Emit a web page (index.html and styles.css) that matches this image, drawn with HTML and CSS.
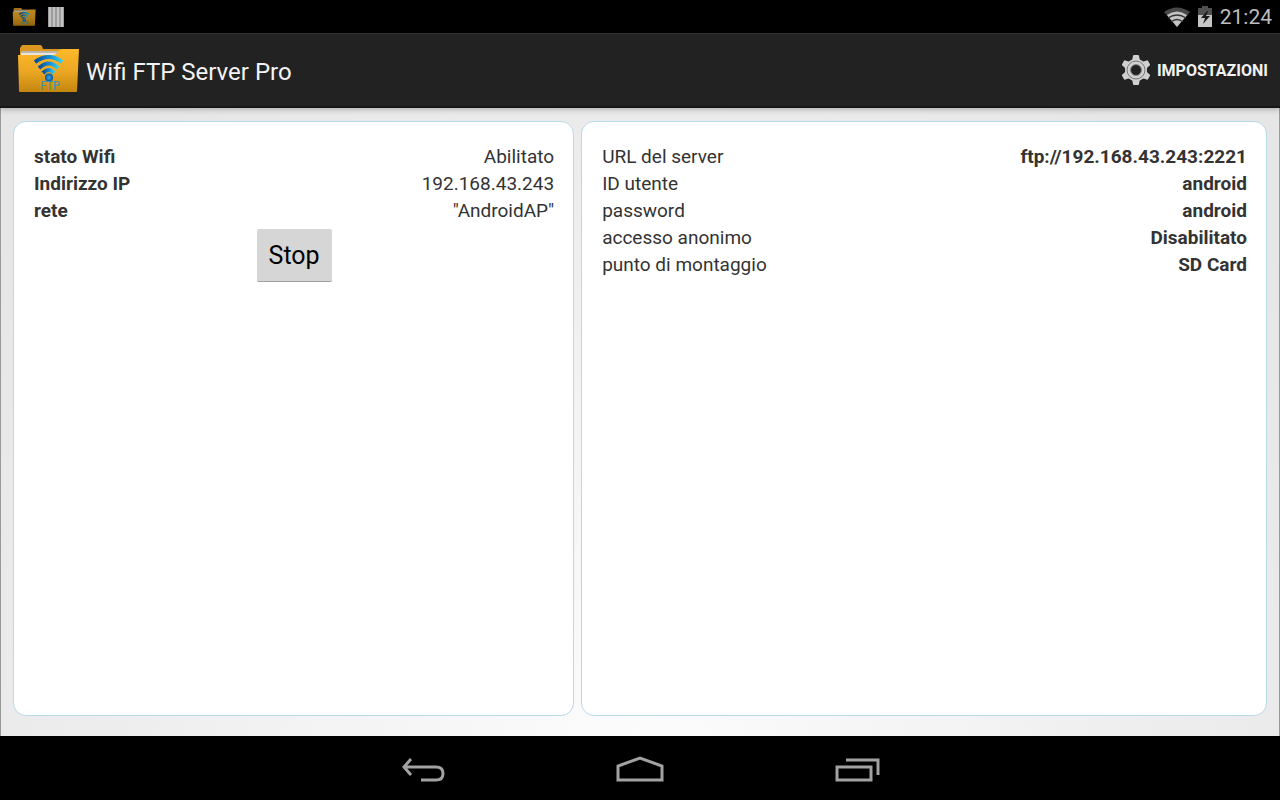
FILE: index.html
```html
<!DOCTYPE html>
<html lang="it">
  <head>
    <meta charset="UTF-8" />
    <meta name="viewport" content="width=device-width, initial-scale=1.0" />
    <title>Wifi FTP Server Pro</title>
    <link rel="stylesheet" href="styles.css">
  </head>
  <body>
    <div class="status-bar">
      <div class="notifications">
        <svg class="small-folder" width="24" height="20" viewBox="0 0 64 50">
          <use href="#folder" />
        </svg>
        <svg width="16" height="20" viewBox="0 0 16 20">
          <rect width="16" height="20" fill="#777" />
          <path d="M2 0V20M6 0V20M10 0V20M14 0V20" stroke="#c4c4c4" stroke-width="3" />
        </svg>
      </div>
      <div class="system">
        <svg width="26" height="20" viewBox="0 0 26 20">
          <path d="M0 5Q13 -4 26 5L13 20Z" fill="#484848" />
          <path d="M3 8Q13 1 23 8L13 20Z" fill="#c4c4c4" />
          <path d="M4 11Q13 5 22 11M7 15Q13 10 19 15" fill="none" stroke="#333" stroke-width="1.300" />
        </svg>
        <svg width="14" height="21" viewBox="0 0 14 21">
          <path d="M4 0H10V2H14V9H0V2H4Z" fill="#505050" />
          <path d="M0 9H14V21H0Z" fill="#c4c4c4" />
          <path d="M9 5L3 12H7L5 18L12 10H8L10 5Z" fill="#1a1a1a" />
        </svg>
        <span class="clock">21:24</span>
      </div>
    </div>

    <header class="action-bar">
      <svg class="logo" width="64" height="50" viewBox="0 1 64 50">
        <defs>
          <linearGradient id="gold" x1="0" y1="0" x2="0" y2="1">
            <stop offset="0" stop-color="#fdb82a" />
            <stop offset="0.5" stop-color="#eda824" />
            <stop offset="1" stop-color="#c4860f" />
          </linearGradient>
          <linearGradient id="wave" x1="0" y1="0" x2="1" y2="0">
            <stop offset="0" stop-color="#084d96" />
            <stop offset="0.5" stop-color="#1687cf" />
            <stop offset="1" stop-color="#2bd0f4" />
          </linearGradient>
          <radialGradient id="ball">
            <stop offset="0" stop-color="#35a7ee" />
            <stop offset="1" stop-color="#07539b" />
          </radialGradient>
        </defs>
        <g id="folder">
          <path d="M4 12V4L6 1H24Q26 1 27 5H44V14H4Z" fill="#dc9720" />
          <path d="M5 7H42V13H5Z" fill="#bcb5ab" />
          <path d="M5 9H42V13H5Z" fill="#e9e5df" />
          <path d="M2 11H38Q41 10 43 6Q44 5 46 5H63L61 47Q61 48 60 48H4Q3 48 3 47Z" fill="url(#gold)" />
          <g fill="none" stroke="url(#wave)" stroke-width="4">
            <path d="M19 18Q33 8 46 18" />
            <path d="M23 24Q33 15 42 24" />
            <path d="M27 29Q33 23 38 29" />
          </g>
          <circle cx="33" cy="33.500" r="4" fill="url(#ball)" />
          <text class="logo-text" x="34" y="46" text-anchor="middle">FTP</text>
        </g>
      </svg>
      <h1 class="title">Wifi FTP Server Pro</h1>
      <button class="settings" type="button">
        <svg width="28" height="30" viewBox="0 0 28 30">
          <g fill="#d0d0d0">
            <circle cx="14" cy="15" r="11" />
            <path id="teeth" d="M10 6L11 1Q11 0 12 0H16Q17 0 17 1L18 6V24L17 29Q17 30 16 30H12Q11 30 11 29L10 24Z" />
            <use href="#teeth" transform="rotate(60 14 15)" />
            <use href="#teeth" transform="rotate(120 14 15)" />
          </g>
          <circle cx="14" cy="15" r="9" fill="none" stroke="#777" stroke-width="1" />
          <circle cx="14" cy="15" r="5.500" fill="#222" stroke="#8a8a8a" stroke-width="1" />
        </svg>
        Impostazioni
      </button>
    </header>

    <main class="content">
      <section class="panel">
        <dl class="info">
          <div class="row"><dt class="strong">stato Wifi</dt><dd>Abilitato</dd></div>
          <div class="row"><dt class="strong">Indirizzo IP</dt><dd>192.168.43.243</dd></div>
          <div class="row"><dt class="strong">rete</dt><dd>"AndroidAP"</dd></div>
        </dl>
        <button class="stop" type="button">Stop</button>
      </section>

      <section class="panel">
        <dl class="info">
          <div class="row"><dt>URL del server</dt><dd class="strong">ftp://192.168.43.243:2221</dd></div>
          <div class="row"><dt>ID utente</dt><dd class="strong">android</dd></div>
          <div class="row"><dt>password</dt><dd class="strong">android</dd></div>
          <div class="row"><dt>accesso anonimo</dt><dd class="strong">Disabilitato</dd></div>
          <div class="row"><dt>punto di montaggio</dt><dd class="strong">SD Card</dd></div>
        </dl>
      </section>
    </main>

    <nav class="nav-bar">
      <button class="nav-button" type="button" aria-label="Indietro">
        <svg width="48" height="32" viewBox="0 0 48 32">
          <path d="M5 11H37Q44 11 44 17.500Q44 24 37 24H22M12 3L5 11L12 19" />
        </svg>
      </button>
      <button class="nav-button" type="button" aria-label="Home">
        <svg width="48" height="32" viewBox="0 0 48 32">
          <path d="M2 24V10L24 2L46 10V24Z" />
        </svg>
      </button>
      <button class="nav-button" type="button" aria-label="Recenti">
        <svg width="48" height="32" viewBox="0 0 48 32">
          <path d="M4 11H38V24H4ZM13 4H45V19" />
        </svg>
      </button>
    </nav>
  </body>
</html>
```

FILE: styles.css
```css
* {
  box-sizing: border-box;
}
body {
  display: flex;
  flex-direction: column;
  min-height: 100vh;
  margin: 0;
  background: #000;
  color: #333;
  font-family: Roboto, sans-serif;
}
button {
  font-family: inherit;
  cursor: pointer;
}
svg {
  display: block;
}
.status-bar {
  display: flex;
  justify-content: space-between;
  align-items: center;
  height: 33px;
  padding: 0 8px 0 12px;
}
.notifications {
  display: flex;
  align-items: center;
  gap: 12px;
}
.small-folder {
  opacity: 0.75;
}
.system {
  display: flex;
  align-items: center;
  gap: 8px;
}
.clock {
  color: #bebebe;
  font-size: 21px;
  line-height: 32px;
}
.action-bar {
  display: flex;
  align-items: center;
  gap: 6px;
  height: 75px;
  padding: 0 12px 0 16px;
  background: #222;
  border-top: 1px solid #303030;
  border-bottom: 2px solid #161616;
  box-shadow: 0 1px 6px rgba(0, 0, 0, 0.3);
  z-index: 1;
}
.logo-text {
  fill: #2d94c8;
  font-family: "Noto Sans", sans-serif;
  font-size: 12px;
}
.title {
  flex: 1;
  margin: 0;
  padding-top: 4px;
  color: #f3f3f3;
  font-size: 24px;
  font-weight: 400;
  line-height: 32px;
}
.settings {
  display: flex;
  align-items: center;
  gap: 7px;
  padding: 0;
  background: none;
  border: none;
  color: #f3f3f3;
  font-size: 16px;
  font-weight: 700;
  text-transform: uppercase;
}
.content {
  flex: 1;
  display: grid;
  grid-template-columns: 9fr 11fr;
  gap: 7px;
  padding: 13px 12px 20px;
  background: radial-gradient(circle at 50% 100%, #fcfcfc 0, #e6e6e6 800px);
  border: solid #999;
  border-width: 0 1px;
}
.panel {
  display: flex;
  flex-direction: column;
  align-items: center;
  gap: 5px;
  padding: 21px 19px 20px 20px;
  background: #fff;
  border: 1px solid #b8dae6;
  border-radius: 13px;
}
.info {
  width: 100%;
  margin: 0;
  font-size: 19px;
  line-height: 27px;
}
.row {
  display: flex;
  justify-content: space-between;
}
.row dd {
  margin: 0;
}
.strong {
  font-weight: 700;
}
.stop {
  height: 53px;
  padding: 0 12px;
  background: #d6d6d6;
  border: none;
  border-bottom: 1px solid #a0a0a0;
  border-radius: 2px;
  color: #000;
  font-size: 25px;
}
.nav-bar {
  display: flex;
  justify-content: center;
  align-items: center;
  gap: 169px;
  height: 64px;
  padding-top: 8px;
}
.nav-button {
  padding: 0;
  background: none;
  border: none;
}
.nav-button path {
  fill: none;
  stroke: #a2a2a2;
  stroke-width: 3;
}
```
